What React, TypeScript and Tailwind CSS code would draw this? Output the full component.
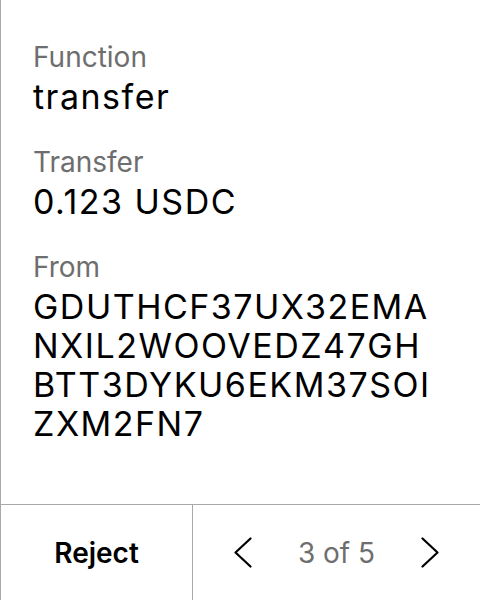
const fields = [
  { label: "Function", value: ["transfer"] },
  { label: "Transfer", value: ["0.123 USDC"] },
  {
    label: "From",
    value: ["GDUTHCF37UX32EMA", "NXIL2WOOVEDZ47GH", "BTT3DYKU6EKM37SOI", "ZXM2FN7"],
  },
];

const Chevron = ({ dir }: { dir: "left" | "right" }) => (
  <svg width="18" height="31" viewBox="0 0 18 31" fill="none" stroke="black" strokeWidth="2.2" strokeLinecap="round" strokeLinejoin="round">
    {dir === "left" ? <polyline points="16.5,1.5 1.5,15.5 16.5,29.5" /> : <polyline points="1.5,1.5 16.5,15.5 1.5,29.5" />}
  </svg>
);

const App = () => {
  return (
    <div
      className="flex h-[600px] w-[480px] flex-col border-l border-[#a9a9a9] bg-white text-black"
      style={{ fontFamily: "Inter, 'Noto Sans', sans-serif" }}
    >
      <main className="flex flex-1 flex-col gap-[26px] pl-[32px] pt-[37px]">
        {fields.map((field) => (
          <div key={field.label} className="flex flex-col">
            <span className="text-[28px] leading-[40px] text-[#6e6e6e]">{field.label}</span>
            <div className="flex flex-col text-[34px] leading-[39px] tracking-[1.5px]">
              {field.value.map((line) => (
                <span key={line}>{line}</span>
              ))}
            </div>
          </div>
        ))}
      </main>

      <footer className="flex h-[96px] border-t border-[#a9a9a9]">
        <button className="flex w-[192px] items-center justify-center border-r border-[#a9a9a9] text-[28px] font-semibold">
          Reject
        </button>
        <div className="flex flex-1 items-center justify-between px-[41px]">
          <Chevron dir="left" />
          <span className="text-[28px] text-[#6e6e6e]">3 of 5</span>
          <Chevron dir="right" />
        </div>
      </footer>
    </div>
  );
};

export default App;
